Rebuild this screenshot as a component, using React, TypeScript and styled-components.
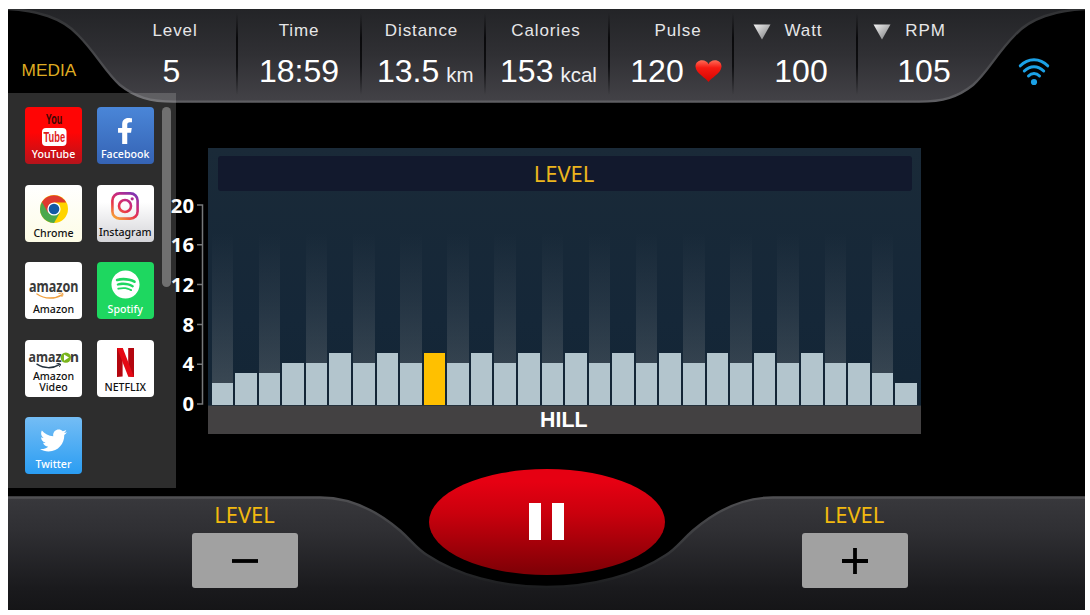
import React from 'react';
import styled, { createGlobalStyle, css } from 'styled-components';
import { FaFacebookF, FaSpotify, FaTwitter } from 'react-icons/fa';

const GlobalStyle = createGlobalStyle`
  * { box-sizing: border-box; }
  body { margin: 0; background: #fff; font-family: "Liberation Sans", Arial, sans-serif; }
  button { font: inherit; border: 0; padding: 0; }
`;

const Page = styled.div`
  width: 1090px;
  height: 615px;
  padding: 9px 5px 5px 8px;
  background: #fff;
  overflow: hidden;
`;

const Screen = styled.div`
  display: grid;
  grid-template-rows: 94px 393px 114px;
  width: 1077px;
  height: 601px;
  background: #000;
  overflow: hidden;
`;

const Backdrop = styled.svg`
  position: absolute;
  inset: 0;
  z-index: 0;
`;

/* ---------- header ---------- */

const Header = styled.header`
  position: relative;
  display: flex;
`;

const MediaTitle = styled.div`
  position: relative;
  width: 104.5px;
  padding: 51px 0 0 13.5px;
  font-size: 17.3px;
  line-height: 20px;
  color: #dfab22;
`;

const Metric = styled.div<{ $last?: boolean }>`
  position: relative;
  width: 124px;
  padding-top: 12px;
  display: flex;
  flex-direction: column;
  gap: 12px;
  ${(p) =>
    !p.$last &&
    css`
      &::after {
        content: '';
        position: absolute;
        right: -1px;
        top: 4px;
        width: 2px;
        height: 82px;
        background: linear-gradient(rgba(8, 8, 10, 0), rgba(8, 8, 10, 0.95) 30%, rgba(8, 8, 10, 0.85) 65%, rgba(8, 8, 10, 0));
      }
    `}
`;

const MetricLabel = styled.div<{ $shift: number }>`
  display: flex;
  justify-content: center;
  padding-left: ${(p) => Math.max(0, p.$shift * 2)}px;
  padding-right: ${(p) => Math.max(0, -p.$shift * 2)}px;
  font-size: 17px;
  line-height: 20px;
  letter-spacing: 0.9px;
  color: #e6e6e8;
  white-space: nowrap;
`;

const MetricValue = styled.div<{ $shift: number }>`
  display: flex;
  justify-content: center;
  align-items: baseline;
  gap: 7px;
  padding-left: ${(p) => Math.max(0, p.$shift * 2)}px;
  padding-right: ${(p) => Math.max(0, -p.$shift * 2)}px;
  font-size: 32px;
  line-height: 36px;
  color: #fff;
  white-space: nowrap;
`;

const Unit = styled.span`
  font-size: 20.5px;
  color: #f0f0f2;
`;

const Marker = styled.svg`
  margin: 3px 14px 0 0;
`;

const HeartSvg = styled.svg`
  margin-left: 4px;
`;

const WifiSvg = styled.svg`
  position: relative;
  margin: 48px 0 0 37.5px;
`;

/* ---------- media drawer ---------- */

const Main = styled.main`
  display: flex;
`;

const Drawer = styled.aside`
  position: relative;
  z-index: 2;
  display: flex;
  width: 168px;
  height: 395px;
  margin-top: -10px;
  padding: 14px 5px 0 17px;
  background: rgba(205, 205, 205, 0.22);
`;

const Apps = styled.div`
  display: grid;
  grid-template-columns: 57px 57px;
  grid-auto-rows: 57px;
  gap: 20.5px 14.7px;
`;

const Tile = styled.div<{ $bg: string; $light?: boolean }>`
  position: relative;
  display: flex;
  flex-direction: column;
  align-items: center;
  border-radius: 4px;
  background: ${(p) => p.$bg};
  color: ${(p) => (p.$light ? '#fff' : '#111')};
`;

const Art = styled.div<{ $h: number; $drop?: number }>`
  display: flex;
  align-items: center;
  justify-content: center;
  height: ${(p) => p.$h}px;
  padding-top: ${(p) => p.$drop || 0}px;

  svg {
    flex: none;
    overflow: visible;
  }
`;

const TileName = styled.div`
  font-family: 'Noto Sans', sans-serif;
  font-size: 10.6px;
  font-weight: 500;
  line-height: 11px;
  text-align: center;
  white-space: nowrap;
`;

const ScrollThumb = styled.div`
  width: 9px;
  height: 180px;
  margin-left: 8.5px;
  border-radius: 5px;
  background: #707070;
`;

/* ---------- chart ---------- */

const Axis = styled.div`
  display: flex;
  justify-content: flex-end;
  width: 28px;
  height: 240px;
  margin-top: 90.5px;
`;

const AxisNumbers = styled.div`
  display: flex;
  flex-direction: column;
  align-items: flex-end;
  margin-right: 3px;
  font-family: 'Noto Sans', sans-serif;
  font-size: 20.3px;
  font-weight: 700;
  color: #fff;
`;

const AxisNumber = styled.div`
  height: 39.7px;
  line-height: 23px;
`;

const AxisLine = styled.svg`
  flex: none;
  margin-top: 10.5px;
`;

const ChartPanel = styled.section`
  display: flex;
  flex-direction: column;
  width: 713.5px;
  height: 286px;
  margin: 44.5px 0 0 3.5px;
  background: linear-gradient(#1a2a38, #152738 60%, #132534);
`;

const ChartTitle = styled.div`
  height: 35px;
  margin: 8.5px 9px 0 10.5px;
  padding-right: 2px;
  border-radius: 3px;
  background: #12192d;
  color: #ecb51d;
  font: 400 22px/34px 'Noto Sans', sans-serif;
  text-align: center;
`;

const Plot = styled.div`
  display: flex;
  flex: 1;
  gap: 2px;
  margin: 42px 4px 0;
`;

const Column = styled.div<{ $ghost: boolean }>`
  display: flex;
  flex: 1;
  align-items: flex-end;
  background: ${(p) =>
    p.$ghost ? 'linear-gradient(rgba(90, 100, 108, 0), rgba(90, 100, 108, 0.22) 40%, rgba(90, 100, 108, 0.62))' : 'none'};
`;

const Bar = styled.div<{ $level: number; $active: boolean }>`
  width: 100%;
  height: ${(p) => p.$level * 9.9 + 2.2}px;
  background: ${(p) => (p.$active ? '#ffc000' : '#b3c5cd')};
`;

const ChartFooter = styled.div`
  height: 28.5px;
  padding-right: 1px;
  border-top: 1px solid #26323d;
  background: #434142;
  color: #fff;
  font-size: 21.3px;
  font-weight: 700;
  line-height: 28px;
  text-align: center;
`;

/* ---------- footer ---------- */

const Footer = styled.footer`
  position: relative;
  display: grid;
  grid-template-columns: 420.5px 236px 420.5px;
`;

const LevelControl = styled.div<{ $offset: number }>`
  position: relative;
  display: flex;
  flex-direction: column;
  align-items: center;
  width: 106px;
  margin-left: ${(p) => p.$offset}px;
  padding-top: 4px;
`;

const LevelLabel = styled.div`
  color: #f2b90f;
  font: 400 22px/28px 'Noto Sans', sans-serif;
  padding-right: 1px;
`;

const LevelButton = styled.button`
  display: flex;
  align-items: center;
  justify-content: center;
  width: 106px;
  height: 55px;
  margin-top: 5px;
  border-radius: 3px;
  background: #a1a1a1;
`;

const PauseButton = styled.button`
  position: relative;
  display: flex;
  justify-content: center;
  gap: 11px;
  width: 236px;
  height: 106px;
  margin-top: -27.5px;
  padding-top: 34.5px;
  border-radius: 50%;
  background: linear-gradient(#e60012 12%, #ca000d 42%, #820006 96%);
`;

const PauseBar = styled.span`
  width: 12px;
  height: 37px;
  background: #fff;
`;

const levels = [2, 3, 3, 4, 4, 5, 4, 5, 4, 5, 4, 5, 4, 5, 4, 5, 4, 5, 4, 5, 4, 5, 4, 5, 4, 5, 4, 4, 3, 2];
const activeIndex = 9;

const headerCurve =
  'C28,1 55,9 70,26 C88,44 98,64 112,76 C127,88 142,92.6 166,92.6 H911 C935,92.6 950,88 965,76 C979,64 989,44 1007,26 C1022,9 1049,1 1077,0';
const footerCurve =
  'M-2,1.5 H312 C348,1.5 374,19 392,34.5 C404,45 408,52 419,59 C449,79 492,91 538.5,91 C585,91 628,79 658,59 C669,52 673,45 685,34.5 C703,19 729,1.5 765,1.5 H1079';

function HeaderBackdrop() {
  return (
    <Backdrop width="1077" height="94" viewBox="0 0 1077 94">
      <defs>
        <linearGradient id="head" x1="0" y1="0" x2="0" y2="1">
          <stop offset="0" stopColor="#232427" />
          <stop offset="0.5" stopColor="#303034" />
          <stop offset="1" stopColor="#434247" />
        </linearGradient>
        <linearGradient id="headEdge" x1="0" y1="0" x2="0" y2="1">
          <stop offset="0" stopColor="#303133" />
          <stop offset="1" stopColor="#5e5e62" />
        </linearGradient>
      </defs>
      <path d={`M0,0 ${headerCurve} Z`} fill="url(#head)" />
      <path d={`M0,0 ${headerCurve}`} fill="none" stroke="url(#headEdge)" strokeWidth="2.4" />
    </Backdrop>
  );
}

function FooterBackdrop() {
  return (
    <Backdrop width="1077" height="114" viewBox="0 0 1077 114">
      <defs>
        <linearGradient id="foot" x1="0" y1="0" x2="0" y2="1">
          <stop offset="0" stopColor="#38383c" />
          <stop offset="0.3" stopColor="#2f2f33" />
          <stop offset="0.8" stopColor="#1a1a1d" />
          <stop offset="1" stopColor="#151517" />
        </linearGradient>
        <linearGradient id="footEdge" gradientUnits="userSpaceOnUse" x1="0" y1="0" x2="0" y2="92">
          <stop offset="0" stopColor="#505053" />
          <stop offset="0.5" stopColor="#3a3b3e" />
          <stop offset="1" stopColor="#1c1d1f" />
        </linearGradient>
      </defs>
      <path d={`${footerCurve} V115 H-2 Z`} fill="url(#foot)" />
      <path d={footerCurve} fill="none" stroke="url(#footEdge)" strokeWidth="2.4" />
    </Backdrop>
  );
}

function Triangle() {
  return (
    <Marker width="18" height="16" viewBox="0 0 18 16">
      <defs>
        <linearGradient id="tri" x1="0" y1="0" x2="1" y2="1">
          <stop offset="0" stopColor="#f4f4f4" />
          <stop offset="1" stopColor="#77787a" />
        </linearGradient>
      </defs>
      <path d="M0.5,0.5 H17.5 L9,15.5 Z" fill="url(#tri)" />
    </Marker>
  );
}

function Heart() {
  return (
    <HeartSvg width="27" height="22" viewBox="0 0 27 22">
      <defs>
        <linearGradient id="heart" x1="0" y1="0" x2="0" y2="1">
          <stop offset="0" stopColor="#ff6a55" />
          <stop offset="0.35" stopColor="#f51a12" />
          <stop offset="1" stopColor="#d40500" />
        </linearGradient>
      </defs>
      <path
        d="M13.5,22 C11,18 1,13.5 0.5,6.8 C0.3,2.5 3.6,0.3 7,0.3 C10.3,0.3 12.6,2 13.5,4.2 C14.4,2 16.7,0.3 20,0.3 C23.4,0.3 26.7,2.5 26.5,6.8 C26,13.5 16,18 13.5,22 Z"
        fill="url(#heart)"
      />
    </HeartSvg>
  );
}

function Wifi() {
  return (
    <WifiSvg width="32" height="30" viewBox="0 0 32 30" fill="none" stroke="#1ba1e6" strokeWidth="3" strokeLinecap="round">
      <path d="M2.3,8.8 C10,0.6 22,0.6 29.7,8.8" />
      <path d="M6.3,14 C12,8.3 20,8.3 25.7,14" />
      <path d="M10.5,19 C13.7,15.8 18.3,15.8 21.5,19" />
      <circle cx="16" cy="25" r="3.1" fill="#1ba1e6" stroke="none" />
    </WifiSvg>
  );
}

function YouTubeLogo() {
  return (
    <svg width="57" height="42" viewBox="0 0 57 42" fontFamily="Liberation Sans" fontWeight="700">
      <text x="20.8" y="16.6" fontSize="14.5" fill="#3b0703" textLength="16.4" lengthAdjust="spacingAndGlyphs">You</text>
      <rect x="17" y="21" width="24.5" height="18" rx="4" fill="#fff" />
      <text x="18.6" y="35.4" fontSize="14.5" fill="#e01a1a" textLength="21.5" lengthAdjust="spacingAndGlyphs">Tube</text>
    </svg>
  );
}

function ChromeLogo() {
  return (
    <svg width="28" height="28" viewBox="0 0 28 28">
      <circle cx="14" cy="14" r="14" fill="#ffd400" />
      <path d="M14,14 L1.9,7 A14,14 0 0 0 14,28 L20,17.5 Z" fill="#4ba84c" />
      <path d="M14,14 L7.9,17.5 L1.9,7 A14,14 0 0 1 26.1,7.5 H14 Z" fill="#de3a2f" />
      <circle cx="14" cy="14" r="6.6" fill="#fff" />
      <circle cx="14" cy="14" r="5.3" fill="#1259a5" />
    </svg>
  );
}

function InstagramLogo() {
  return (
    <svg width="28" height="28" viewBox="0 0 28 28" fill="none" stroke="url(#insta)" strokeWidth="2.6">
      <defs>
        <linearGradient id="insta" gradientUnits="userSpaceOnUse" x1="4" y1="28" x2="22" y2="0">
          <stop offset="0" stopColor="#f9b233" />
          <stop offset="0.4" stopColor="#e8334a" />
          <stop offset="0.7" stopColor="#c22a85" />
          <stop offset="1" stopColor="#7a35b5" />
        </linearGradient>
      </defs>
      <rect x="1.4" y="1.4" width="25.2" height="25.2" rx="7.2" />
      <circle cx="14" cy="14" r="6" />
      <circle cx="21.2" cy="6.8" r="1.6" fill="#b22c8f" stroke="none" />
    </svg>
  );
}

function AmazonLogo() {
  return (
    <svg width="57" height="40" viewBox="0 0 57 40">
      <text x="4" y="28.8" fontFamily="Noto Sans" fontWeight="700" fontSize="15.5" fill="#3a3a3a" textLength="49.5" lengthAdjust="spacingAndGlyphs">amazon</text>
      <path d="M12,31 C20,36.5 30,36 37,31.8" fill="none" stroke="#f0a040" strokeWidth="1.5" strokeLinecap="round" />
      <path d="M33.5,30.5 Q37.5,29.4 38,30.6 Q38.2,32.4 36.6,34" fill="none" stroke="#f0a040" strokeWidth="1" />
    </svg>
  );
}

function AmazonVideoLogo() {
  return (
    <svg width="57" height="31" viewBox="0 0 57 31">
      <text x="3.5" y="22.2" fontFamily="Noto Sans" fontWeight="700" fontSize="15" fill="#3a3a3a" textLength="33" lengthAdjust="spacingAndGlyphs">amaz</text>
      <text x="45" y="22.2" fontFamily="Noto Sans" fontWeight="700" fontSize="15" fill="#3a3a3a" textLength="9" lengthAdjust="spacingAndGlyphs">n</text>
      <circle cx="40.8" cy="17.6" r="5.2" fill="#7ab51d" />
      <path d="M39,14.5 L44,17.6 L39,20.7 Z" fill="#fff" />
      <path d="M12,24.2 C19,28.8 28,28.6 34.4,24.6" fill="none" stroke="#22303c" strokeWidth="1.5" strokeLinecap="round" />
      <path d="M31.5,23.8 Q35.3,22.8 35.5,24 Q35.7,25.5 34.3,26.8" fill="none" stroke="#22303c" strokeWidth="1" />
    </svg>
  );
}

function NetflixLogo() {
  return (
    <svg width="17" height="29" viewBox="0 0 17 29">
      <path d="M0,0 H5.6 V28.4 L0,29 Z M11.2,0 H17 V29 L11.2,28.4 Z" fill="#b3060f" />
      <path d="M0,0 H5.8 L17,29 L11.2,28.4 Z" fill="#e50914" />
    </svg>
  );
}

export default function App() {
  return (
    <Page>
      <GlobalStyle />
      <Screen>
        <Header>
          <HeaderBackdrop />
          <MediaTitle>MEDIA</MediaTitle>
          <Metric>
            <MetricLabel $shift={0.5}>Level</MetricLabel>
            <MetricValue $shift={-3}>5</MetricValue>
          </Metric>
          <Metric>
            <MetricLabel $shift={0.5}>Time</MetricLabel>
            <MetricValue $shift={0.5}>18:59</MetricValue>
          </Metric>
          <Metric>
            <MetricLabel $shift={-1}>Distance</MetricLabel>
            <MetricValue $shift={2.7}>
              13.5 <Unit>km</Unit>
            </MetricValue>
          </Metric>
          <Metric>
            <MetricLabel $shift={-0.5}>Calories</MetricLabel>
            <MetricValue $shift={2}>
              153 <Unit>kcal</Unit>
            </MetricValue>
          </Metric>
          <Metric>
            <MetricLabel $shift={7.5}>Pulse</MetricLabel>
            <MetricValue $shift={5.5}>
              120 <Heart />
            </MetricValue>
          </Metric>
          <Metric>
            <MetricLabel $shift={-7}>
              <Triangle />
              Watt
            </MetricLabel>
            <MetricValue $shift={6.5}>100</MetricValue>
          </Metric>
          <Metric $last>
            <MetricLabel $shift={-9}>
              <Triangle />
              RPM
            </MetricLabel>
            <MetricValue $shift={5.5}>105</MetricValue>
          </Metric>
          <Wifi />
        </Header>

        <Main>
          <Drawer>
            <Apps>
              <Tile $bg="linear-gradient(#ff0505 45%, #b5131b)" $light>
                <Art $h={42}><YouTubeLogo /></Art>
                <TileName>YouTube</TileName>
              </Tile>
              <Tile $bg="linear-gradient(#4a86d8, #3563b4)" $light>
                <Art $h={42} $drop={5}><FaFacebookF size={26} /></Art>
                <TileName>Facebook</TileName>
              </Tile>
              <Tile $bg="linear-gradient(#fff, #fdfce6)">
                <Art $h={43} $drop={6}><ChromeLogo /></Art>
                <TileName>Chrome</TileName>
              </Tile>
              <Tile $bg="linear-gradient(#fff 30%, #d4d4d8)">
                <Art $h={42} $drop={1}><InstagramLogo /></Art>
                <TileName>Instagram</TileName>
              </Tile>
              <Tile $bg="#fff">
                <Art $h={42}><AmazonLogo /></Art>
                <TileName>Amazon</TileName>
              </Tile>
              <Tile $bg="#1ed760" $light>
                <Art $h={42} $drop={3}><FaSpotify size={29} /></Art>
                <TileName>Spotify</TileName>
              </Tile>
              <Tile $bg="#fff">
                <Art $h={31}><AmazonVideoLogo /></Art>
                <TileName>Amazon<br />Video</TileName>
              </Tile>
              <Tile $bg="#fff">
                <Art $h={42} $drop={4}><NetflixLogo /></Art>
                <TileName>NETFLIX</TileName>
              </Tile>
              <Tile $bg="linear-gradient(#74bdf5, #2a9df2)" $light>
                <Art $h={42} $drop={5}><FaTwitter size={27} /></Art>
                <TileName>Twitter</TileName>
              </Tile>
            </Apps>
            <ScrollThumb />
          </Drawer>

          <Axis>
            <AxisNumbers>
              {[20, 16, 12, 8, 4, 0].map((n) => (
                <AxisNumber key={n}>{n}</AxisNumber>
              ))}
            </AxisNumbers>
            <AxisLine width="7" height="201" viewBox="0 0 7 201" fill="none" stroke="#77797b" strokeWidth="1.5">
              <path d="M0,1 H5.5 V200 H0 M0,40.8 H5 M0,80.6 H5 M0,120.4 H5 M0,160.2 H5" />
            </AxisLine>
          </Axis>

          <ChartPanel>
            <ChartTitle>LEVEL</ChartTitle>
            <Plot>
              {levels.map((level, i) => (
                <Column key={i} $ghost={i % 2 === 0}>
                  <Bar $level={level} $active={i === activeIndex} />
                </Column>
              ))}
            </Plot>
            <ChartFooter>HILL</ChartFooter>
          </ChartPanel>
        </Main>

        <Footer>
          <FooterBackdrop />
          <LevelControl $offset={184}>
            <LevelLabel>LEVEL</LevelLabel>
            <LevelButton aria-label="Level down">
              <svg width="26" height="26" viewBox="0 0 26 26" stroke="#000" strokeWidth="3.8">
                <path d="M0,13 H26" />
              </svg>
            </LevelButton>
          </LevelControl>
          <PauseButton aria-label="Pause">
            <PauseBar />
            <PauseBar />
          </PauseButton>
          <LevelControl $offset={137}>
            <LevelLabel>LEVEL</LevelLabel>
            <LevelButton aria-label="Level up">
              <svg width="26" height="26" viewBox="0 0 26 26" stroke="#000" strokeWidth="3.8">
                <path d="M0,13 H26 M13,0 V26" />
              </svg>
            </LevelButton>
          </LevelControl>
        </Footer>
      </Screen>
    </Page>
  );
}
